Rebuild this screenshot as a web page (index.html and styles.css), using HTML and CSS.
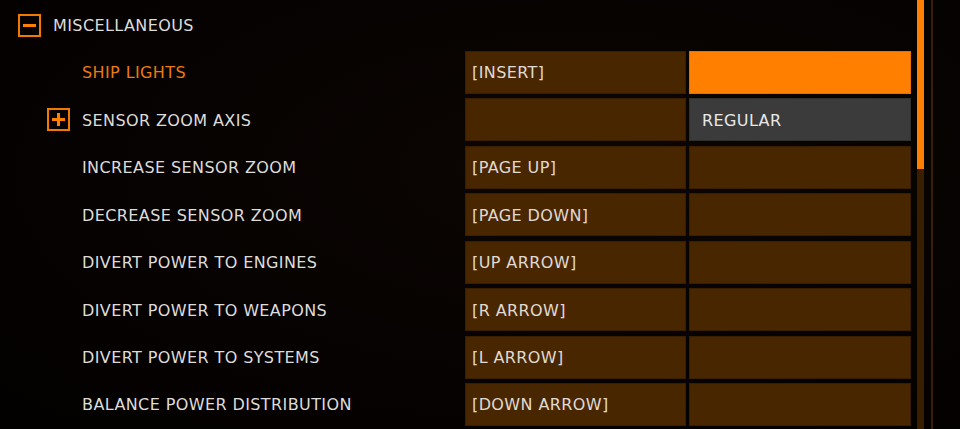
FILE: index.html
```html
<!DOCTYPE html>
<html>
<head>
<meta charset="utf-8">
<link rel="stylesheet" href="styles.css">
</head>
<body>
<div class="panel">
  <div class="list">
    <div class="row">
      <div class="label header">
        <span class="toggle"><span class="bar-h"></span></span>
        <span class="text">MISCELLANEOUS</span>
      </div>
    </div>
    <div class="row">
      <div class="label"><span class="slot"></span><span class="text active">SHIP LIGHTS</span></div>
      <div class="cell">[INSERT]</div>
      <div class="cell selected"></div>
    </div>
    <div class="row">
      <div class="label"><span class="toggle"><span class="bar-h"></span><span class="bar-v"></span></span><span class="text">SENSOR ZOOM AXIS</span></div>
      <div class="cell"></div>
      <div class="cell grey">REGULAR</div>
    </div>
    <div class="row">
      <div class="label"><span class="slot"></span><span class="text">INCREASE SENSOR ZOOM</span></div>
      <div class="cell">[PAGE UP]</div>
      <div class="cell"></div>
    </div>
    <div class="row">
      <div class="label"><span class="slot"></span><span class="text">DECREASE SENSOR ZOOM</span></div>
      <div class="cell">[PAGE DOWN]</div>
      <div class="cell"></div>
    </div>
    <div class="row">
      <div class="label"><span class="slot"></span><span class="text">DIVERT POWER TO ENGINES</span></div>
      <div class="cell">[UP ARROW]</div>
      <div class="cell"></div>
    </div>
    <div class="row">
      <div class="label"><span class="slot"></span><span class="text">DIVERT POWER TO WEAPONS</span></div>
      <div class="cell">[R ARROW]</div>
      <div class="cell"></div>
    </div>
    <div class="row">
      <div class="label"><span class="slot"></span><span class="text">DIVERT POWER TO SYSTEMS</span></div>
      <div class="cell">[L ARROW]</div>
      <div class="cell"></div>
    </div>
    <div class="row">
      <div class="label"><span class="slot"></span><span class="text">BALANCE POWER DISTRIBUTION</span></div>
      <div class="cell">[DOWN ARROW]</div>
      <div class="cell"></div>
    </div>
  </div>
  <div class="scroll">
    <div class="thumb"></div>
  </div>
  <div class="rail"></div>
</div>
</body>
</html>
```

FILE: styles.css
```css
html, body {
  margin: 0;
  padding: 0;
  height: 100%;
  overflow: hidden;
}
body {
  background: radial-gradient(ellipse at 60% 40%, #0c0603 0%, #050201 60%, #030100 100%);
  font-family: "DejaVu Sans", sans-serif;
  font-size: 16px;
  letter-spacing: 0.4px;
  color: #dedcd9;
}
.panel {
  display: flex;
  height: 429px;
}
.list {
  width: 911px;
  flex: none;
  padding-top: 3.57px;
  display: flex;
  flex-direction: column;
  gap: 4.43px;
}
.row {
  display: grid;
  grid-template-columns: 465px 221px 3px 222px;
  height: 43px;
  flex: none;
}
.row > .cell:last-child {
  grid-column: 4;
}
.label {
  display: flex;
  align-items: center;
  gap: 12px;
  padding-left: 47px;
}
.label.header {
  padding-left: 18px;
}
.slot {
  width: 23px;
  flex: none;
}
.toggle {
  position: relative;
  box-sizing: border-box;
  width: 23px;
  height: 23px;
  border: 2px solid #f07a00;
  flex: none;
}
.bar-h {
  position: absolute;
  left: 3px;
  right: 3px;
  top: 8px;
  height: 3px;
  background: #ff8000;
}
.bar-v {
  position: absolute;
  top: 3px;
  bottom: 3px;
  left: 8px;
  width: 3px;
  background: #ff8000;
}
.text {
  white-space: nowrap;
  padding-top: 1px;
}
.text.active {
  color: #ee7a0c;
}
.cell {
  box-sizing: border-box;
  background: #472600;
  border: 1px solid #3a1e00;
  display: flex;
  align-items: center;
  padding-left: 6px;
  padding-top: 1px;
  color: #e0dad3;
  white-space: nowrap;
}
.cell.selected {
  background: #ff8000;
  border-color: #e57200;
}
.cell.grey {
  background: #3b3b3b;
  border-color: #303030;
  padding-left: 12px;
  color: #e8e8e8;
}
.scroll {
  margin-left: 6px;
  width: 7px;
  flex: none;
  height: 100%;
  background: #3a1e00;
  display: flex;
  flex-direction: column;
}
.thumb {
  height: 169px;
  background: #ff8000;
}
.rail {
  margin-left: 7px;
  width: 2px;
  flex: none;
  height: 100%;
  background: #3a1e00;
}
```
